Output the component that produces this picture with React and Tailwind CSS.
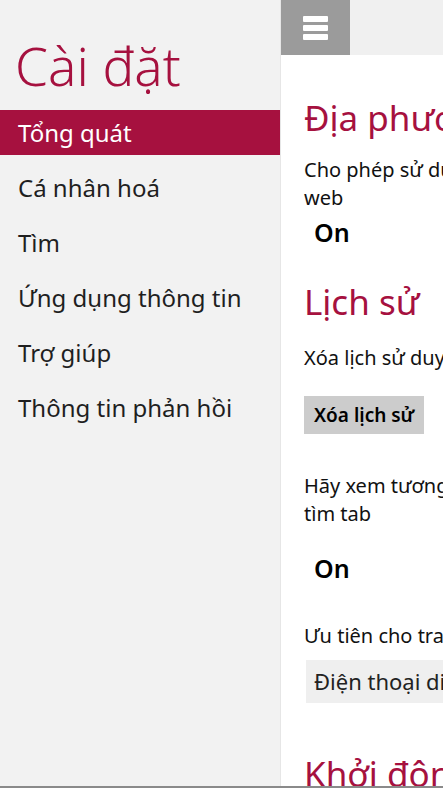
const menu = ['Cá nhân hoá', 'Tìm', 'Ứng dụng thông tin', 'Trợ giúp', 'Thông tin phản hồi']

function Heading({ children, className = '' }) {
  return (
    <h2 className={`text-[35px] leading-[40px] text-[#a6113f] whitespace-nowrap ${className}`}>{children}</h2>
  )
}

export default function App() {
  return (
    <div
      className="relative flex w-[443px] h-[788px] overflow-hidden bg-white"
      style={{ fontFamily: '"Noto Sans", "Open Sans", sans-serif' }}
    >
      {/* left navigation */}
      <aside className="w-[280px] shrink-0 bg-[#f2f2f2]">
        <h1 className="mt-[40px] ml-[15px] text-[53px] leading-[52px] font-light text-[#a6113f]">Cài đặt</h1>
        <nav className="mt-[18px]">
          <div className="h-[45px] mb-[10px] bg-[#a6113f] pl-[18px] text-[24px] leading-[45px] text-white">
            Tổng quát
          </div>
          {menu.map((m) => (
            <div key={m} className="h-[45px] mb-[10px] pl-[18px] text-[24px] leading-[45px] text-[#1f1f1f] whitespace-nowrap">
              {m}
            </div>
          ))}
        </nav>
      </aside>

      {/* content */}
      <main className="w-[430px] shrink-0 border-l border-[#e6e6e6]">
        <div className="flex h-[55px] bg-[#f0f0f0]">
          <button className="w-[69px] h-[55px] bg-[#9b9b9b] flex flex-col items-center justify-center gap-[3px] pr-[1px]">
            <span className="block w-[25px] h-[6px] rounded-[1px] bg-white" />
            <span className="block w-[25px] h-[6px] rounded-[1px] bg-white" />
            <span className="block w-[25px] h-[6px] rounded-[1px] bg-white" />
          </button>
        </div>

        <div className="pl-[23px] text-[20px] leading-[28px] text-[#111]">
          <Heading className="mt-[43px]">Địa phương</Heading>
          <p className="mt-[18px] whitespace-nowrap">
            Cho phép sử dụng vị trí của tôi cho tìm kiếm
            <br />
            web
          </p>
          <div className="mt-[4px] ml-[10px] text-[25px] leading-[32px] font-semibold text-black">On</div>

          <Heading className="mt-[34px]">Lịch sử</Heading>
          <p className="mt-[22px] whitespace-nowrap">Xóa lịch sử duyệt web</p>
          <button className="block mt-[24px] h-[38px] px-[10px] bg-[#cccccc] text-[19px] leading-[38px] font-semibold text-black">
            Xóa lịch sử
          </button>
          <p className="mt-[38px] whitespace-nowrap">
            Hãy xem tương tự khi tôi chuyển sang
            <br />
            tìm tab
          </p>
          <div className="mt-[24px] ml-[10px] text-[25px] leading-[32px] font-semibold text-black">On</div>

          <p className="mt-[38px] whitespace-nowrap">Ưu tiên cho trang web dành cho</p>
          <div className="mt-[10px] ml-[2px] h-[43px] bg-[#efefef] pl-[8px] text-[22px] leading-[43px] text-[#222] whitespace-nowrap">
            Điện thoại di động
          </div>
          <Heading className="mt-[51px]">Khởi động</Heading>
        </div>
      </main>

      <div className="absolute bottom-0 left-0 right-0 h-[2px] bg-[#8a8a8a]" />
    </div>
  )
}
